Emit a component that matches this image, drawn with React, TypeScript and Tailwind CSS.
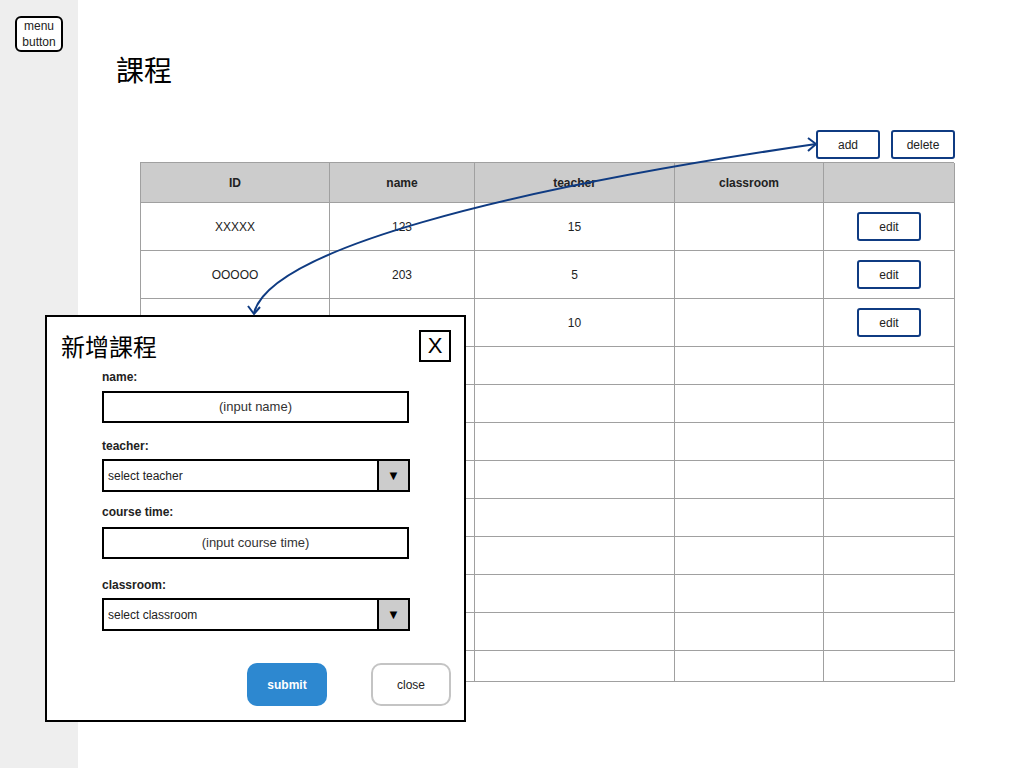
import React from "react";

const font = { fontFamily: '"Liberation Sans", Arial, "Noto Sans CJK TC", sans-serif' };

const cols = [189, 145, 200, 149, 131];

function Cell({ children, bold, h }: { children?: React.ReactNode; bold?: boolean; h: number }) {
  return (
    <div
      className={`flex items-center justify-center border-b border-r border-[#a0a0a0] text-[12px] text-[#222] ${bold ? "font-bold" : ""}`}
      style={{ height: h }}
    >
      {children}
    </div>
  );
}

function EditBtn() {
  return (
    <div className="flex h-[29px] w-[64px] items-center justify-center rounded-[3px] border-2 border-[#0f3b82] bg-white text-[12px] text-[#222]">
      edit
    </div>
  );
}

function Select({ text }: { text: string }) {
  return (
    <div className="flex h-[33px] w-[308px] items-stretch border-2 border-black bg-white">
      <div className="flex flex-1 items-center pl-[4px] text-[12px] text-[#222]">{text}</div>
      <div className="flex w-[31px] items-center justify-center border-l-2 border-black bg-[#cccccc] text-[13px] text-black">▼</div>
    </div>
  );
}

function Input({ text }: { text: string }) {
  return (
    <div className="flex h-[32px] w-[307px] items-center justify-center border-2 border-black bg-white text-[13px] text-[#333]">
      {text}
    </div>
  );
}

export default function App() {
  const dataRows = [
    ["XXXXX", "123", "15", ""],
    ["OOOOO", "203", "5", ""],
    ["", "", "10", ""],
  ];
  const rowHeights = [38, 38, 38, 38, 38, 38, 38, 38, 31];
  const tpl = cols.map((c) => c + "px").join(" ");
  return (
    <div className="relative flex h-[768px] w-[1024px] overflow-hidden bg-white" style={font}>
      <div className="h-full w-[78px] shrink-0 bg-[#eeeeee] pl-[15px] pt-[16px]">
        <div className="flex h-[36px] w-[48px] flex-col items-center justify-center rounded-[6px] border-2 border-black bg-white text-[12px] leading-[16px] text-[#222]">
          <span>menu</span>
          <span>button</span>
        </div>
      </div>
      <div className="flex flex-1 flex-col">
        <div className="pl-[38px] pt-[53px] text-[28px] leading-[32px] text-black" style={{ fontFamily: '"Noto Sans CJK TC", sans-serif' }}>
          課程
        </div>
        <div className="mt-[45px] flex justify-end gap-[11px] pr-[69px]">
          <div className="flex h-[29px] w-[64px] items-center justify-center rounded-[3px] border-2 border-[#0f3b82] text-[12px] text-[#222]">add</div>
          <div className="flex h-[29px] w-[64px] items-center justify-center rounded-[3px] border-2 border-[#0f3b82] text-[12px] text-[#222]">delete</div>
        </div>
        <div className="ml-[62px] mt-[3px] w-[814px] border-l border-t border-[#a0a0a0]">
          <div className="grid bg-[#cccccc]" style={{ gridTemplateColumns: tpl }}>
            <Cell bold h={40}>ID</Cell>
            <Cell bold h={40}>name</Cell>
            <Cell bold h={40}>teacher</Cell>
            <Cell bold h={40}>classroom</Cell>
            <Cell bold h={40}></Cell>
          </div>
          {dataRows.map((r, i) => (
            <div key={i} className="grid" style={{ gridTemplateColumns: tpl }}>
              <Cell h={48}>{r[0]}</Cell>
              <Cell h={48}>{r[1]}</Cell>
              <Cell h={48}>{r[2]}</Cell>
              <Cell h={48}>{r[3]}</Cell>
              <Cell h={48}>
                <EditBtn />
              </Cell>
            </div>
          ))}
          {rowHeights.map((h, i) => (
            <div key={"e" + i} className="grid" style={{ gridTemplateColumns: tpl }}>
              <Cell h={h} />
              <Cell h={h} />
              <Cell h={h} />
              <Cell h={h} />
              <Cell h={h} />
            </div>
          ))}
        </div>
      </div>

      {/* Modal */}
      <div className="absolute left-[45px] top-[315px] flex h-[407px] w-[421px] flex-col border-2 border-black bg-white">
        <div className="mt-[13px] flex items-center justify-between pl-[14px] pr-[13px]">
          <div className="text-[24px] leading-[32px] text-black" style={{ fontFamily: '"Noto Sans CJK TC", sans-serif' }}>
            新增課程
          </div>
          <div className="flex h-[32px] w-[32px] items-center justify-center border-2 border-black text-[22px] leading-none text-black">X</div>
        </div>
        <div className="flex flex-col pl-[55px]">
          <div className="mt-[7px] text-[12px] font-bold leading-[16px] text-[#222]">name:</div>
          <div className="mt-[6px]"><Input text="(input name)" /></div>
          <div className="mt-[15px] text-[12px] font-bold leading-[16px] text-[#222]">teacher:</div>
          <div className="mt-[5px]"><Select text="select teacher" /></div>
          <div className="mt-[12px] text-[12px] font-bold leading-[16px] text-[#222]">course time:</div>
          <div className="mt-[7px]"><Input text="(input course time)" /></div>
          <div className="mt-[18px] text-[12px] font-bold leading-[16px] text-[#222]">classroom:</div>
          <div className="mt-[5px]"><Select text="select classroom" /></div>
        </div>
        <div className="mt-[32px] flex justify-end gap-[44px] pr-[13px]">
          <div className="flex h-[43px] w-[80px] items-center justify-center rounded-[10px] bg-[#2d88d0] text-[12px] font-bold text-white">submit</div>
          <div className="flex h-[43px] w-[80px] items-center justify-center rounded-[10px] border-2 border-[#c4c4c4] bg-white text-[12px] text-[#222]">close</div>
        </div>
      </div>

      {/* Connector arrow */}
      <svg className="pointer-events-none absolute left-0 top-0" width="1024" height="768" viewBox="0 0 1024 768">
        <path d="M254 313 C 270 250, 500 190, 816 144" fill="none" stroke="#0f3b82" strokeWidth="2" />
        <path d="M808 138 L816 144 L808 151" fill="none" stroke="#0f3b82" strokeWidth="2" />
        <path d="M248 306 L254 314 L260 307" fill="none" stroke="#0f3b82" strokeWidth="2" />
      </svg>
    </div>
  );
}
